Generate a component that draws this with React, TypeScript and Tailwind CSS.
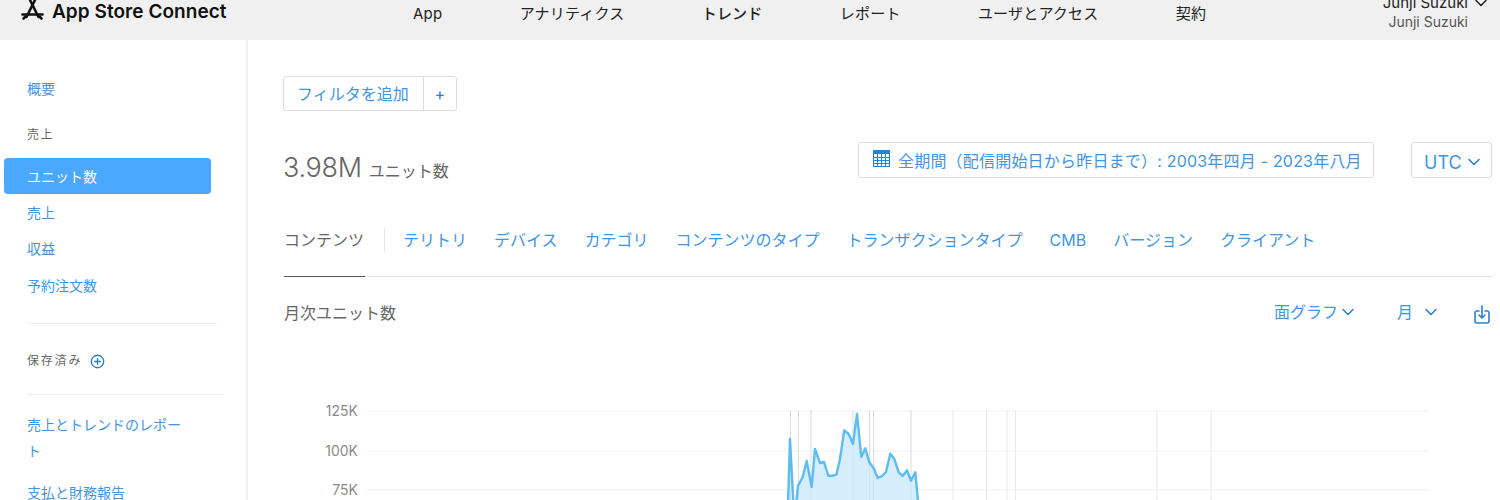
import React from "react";

const font = "font-['Inter','Noto_Sans_CJK_JP','Noto_Sans',sans-serif]";

const nav = [
  { t: "App", c: "" },
  { t: "アナリティクス", c: "" },
  { t: "トレンド", c: "font-medium" },
  { t: "レポート", c: "" },
  { t: "ユーザとアクセス", c: "" },
  { t: "契約", c: "" },
];

const tabs = ["テリトリ", "デバイス", "カテゴリ", "コンテンツのタイプ", "トランザクションタイプ", "CMB", "バージョン", "クライアント"];

const spike = "788,505 790,439 793.5,505";
const body =
  "796,505 798,486 802.7,477 806.7,461 811.7,487 815,449 820,463 824,462 828.3,475.7 832.7,475.7 836.3,474.7 840,459 844.3,430.3 848.7,434 853,444 857,414 861.3,457 865.3,448.3 869.3,462.3 873.7,468.3 877.7,478 882,476 886,472 890.3,453.7 894.3,459 898.7,472.3 902.7,476 907,470.3 911,480.7 915.3,472.3 918.3,505";

function Chevron({ className = "" }: { className?: string }) {
  return (
    <svg viewBox="0 0 12 8" className={className} fill="none" stroke="currentColor" strokeWidth="1.5" strokeLinecap="round" strokeLinejoin="round">
      <path d="M1 1.5 6 6.5 11 1.5" />
    </svg>
  );
}

function Logo() {
  return (
    <svg viewBox="0 0 23 22" className="w-[23px] h-[22px] text-[#111]" fill="none" stroke="currentColor" strokeWidth="2.6" strokeLinecap="round">
      <path d="M14 0 5.5 17" />
      <path d="M9 0 17.5 17" />
      <path d="M1.5 14.5H21.5" />
      <path d="M2.5 18.5 4 17M20.5 18.5 19 17" />
    </svg>
  );
}

function Chart() {
  const verticals = [790.5, 798.5, 811, 853, 869.5, 873.5, 911, 953, 986.5, 1007, 1015.5, 1157, 1211];
  return (
    <svg className="block absolute left-0 top-[400px]" width="1500" height="100" viewBox="0 400 1500 100">
      {[411, 451, 490].map((y) => (
        <line key={y} x1="366" x2="1428" y1={y} y2={y} stroke="#f1f1f1" />
      ))}
      {verticals.map((x) => (
        <line key={x} x1={x} x2={x} y1="410" y2="500" stroke="#e8e8e8" />
      ))}
      <polygon points={spike} fill="#d6eefc" />
      <polygon points={body} fill="#d6eefc" />
      {verticals.slice(0, 7).map((x) => (
        <line key={x} x1={x} x2={x} y1="410" y2="500" stroke="#c4c9cc" strokeOpacity="0.35" />
      ))}
      <polyline points={spike} fill="none" stroke="#5fbcf0" strokeWidth="2.4" strokeLinejoin="round" />
      <polyline points={body} fill="none" stroke="#5fbcf0" strokeWidth="2.4" strokeLinejoin="round" />
      {[["125K", 416], ["100K", 456], ["75K", 495]].map(([t, y]) => (
        <text key={t} x="358" y={y} textAnchor="end" fontSize="14" fill="#8a8a8a" fontFamily="Inter, sans-serif">
          {t}
        </text>
      ))}
    </svg>
  );
}

export default function App() {
  return (
    <div className={`${font} relative w-[1500px] h-[500px] overflow-hidden bg-white`}>
      <header className="h-10 bg-[#f0f0f0] flex items-start relative">
        <div className="flex items-start ml-[21px] gap-[8px] w-[206px] shrink-0">
          <Logo />
          <span className="text-[19px] leading-[22px] mt-[1px] font-semibold text-[#111] whitespace-nowrap tracking-[0.05px]">App Store Connect</span>
        </div>
        <nav className="flex gap-[77.3px] ml-[186px] mt-[4px] text-[15px] leading-5 tracking-[0.2px] text-[#222] whitespace-nowrap">
          {nav.map((n) => (
            <span key={n.t} className={n.c}>
              {n.t}
            </span>
          ))}
        </nav>
        <div className="ml-auto mr-[13px] -mt-[7px] flex flex-col items-end">
          <div className="flex items-center gap-[7px] text-[#222] text-[15px] leading-[20px] whitespace-nowrap">
            Junji Suzuki <Chevron className="w-[12px] h-[8px]" />
          </div>
          <div className="mr-[19px] text-[#555] text-[14px] leading-[18px] whitespace-nowrap">Junji Suzuki</div>
        </div>
      </header>

      <div className="flex">
        <aside className="w-[248px] h-[460px] border-r-2 border-[#f0f0f0] shrink-0 text-[14px] text-[#4295e2]">
          <div className="pl-[27px] pt-[39px] leading-[20px]">概要</div>
          <div className="pl-[27px] mt-[26px] text-[12px] leading-[20px] tracking-[1.5px] text-[#666]">売上</div>
          <div className="ml-[4px] mt-[13px] w-[207px] h-[36px] bg-[#4aa8ff] rounded-[4px] pl-[23px] flex items-center text-white">
            ユニット数
          </div>
          <div className="pl-[27px] mt-[5px] leading-[28px]">売上</div>
          <div className="pl-[27px] mt-[8px] leading-[28px]">収益</div>
          <div className="pl-[27px] mt-[9px] leading-[28px]">予約注文数</div>
          <div className="ml-[27px] mt-[23px] w-[190px] h-px bg-[#ececec]" />
          <div className="pl-[27px] mt-[29px] flex items-center gap-[6px] text-[12px] leading-4 tracking-[1.8px] text-[#666]">
            保存済み
            <svg viewBox="0 0 16 16" className="w-[15px] h-[15px] ml-[2px] text-[#2a7ccb]" fill="none" stroke="currentColor" strokeWidth="1.5" strokeLinecap="round">
              <circle cx="8" cy="8" r="6.6" />
              <path d="M8 5v6M5 8h6" />
            </svg>
          </div>
          <div className="ml-[27px] mt-[25px] w-[196px] h-px bg-[#ececec]" />
          <div className="pl-[27px] w-[194px] mt-[17px] leading-[26px]">売上とトレンドのレポート</div>
          <div className="pl-[27px] mt-[16px] leading-[26px]">支払と財務報告</div>
        </aside>

        <main className="flex-1 pl-[35px] pr-[8px] min-w-0">
          <div className="mt-[36px] inline-flex h-[35px] border border-[#dedede] rounded-[3px] text-[#4295e2] text-[16px] items-stretch">
            <span className="pl-[13px] pr-[14px] pt-[1px] flex items-center border-r border-[#dedede]">フィルタを追加</span>
            <span className="w-[32px] pt-[1px] flex items-center justify-center text-[#2a7ccb]">+</span>
          </div>

          <div className="flex items-start mt-[31px] h-[44px]">
            <div className="flex items-baseline gap-[7px] text-[#666] mt-[10px]">
              <span className="text-[27px] leading-8 font-light tracking-[-0.3px]">3.98M</span>
              <span className="text-[16px]">ユニット数</span>
            </div>
            <div className="ml-auto flex gap-[37px]">
              <div className="h-[36px] w-[516px] border border-[#dedede] rounded-[3px] flex items-center pl-[14px] gap-[8px] text-[16px] tracking-[0.2px] text-[#4295e2] whitespace-nowrap">
                <svg viewBox="0 0 17 17" className="w-[17px] h-[17px] -mt-[4px] text-[#2a80d4]" fill="none" stroke="currentColor" strokeWidth="1">
                  <rect x="0.5" y="0.5" width="16" height="16" />
                  <path d="M0.5 2.5h16" strokeWidth="3" />
                  <path d="M0 7.5h17M0 10.5h17M0 13.5h17M4.5 3v13M8.5 3v13M12.5 3v13" />
                </svg>
                <span className="pt-[1px]">全期間（配信開始日から昨日まで）: 2003年四月 - 2023年八月</span>
              </div>
              <div className="h-[36px] w-[81px] border border-[#dedede] rounded-[3px] flex items-center pl-[12px] gap-[6px] text-[18px] text-[#4295e2]">
                <span className="pt-[5px]">UTC</span> <Chevron className="w-[12px] h-[8px] mt-[3px] text-[#2a7ccb]" />
              </div>
            </div>
          </div>

          <div className="flex items-stretch h-[72px] mt-[19px] border-b border-[#e5e5e5] text-[16px] leading-6 text-[#4295e2] whitespace-nowrap">
            <div className="w-[81px] ml-[1px] pt-[23px] border-b border-[#555] h-[72px] text-[#666]">コンテンツ</div>
            <div className="w-px h-[24px] mt-[23px] ml-[19px] mr-[18px] bg-[#e5e5e5]" />
            <div className="flex gap-[27px] pt-[23px]">
              {tabs.map((t) => (
                <span key={t}>{t}</span>
              ))}
            </div>
          </div>

          <div className="flex items-center h-[36px] mt-[18px] text-[16px] text-[#4295e2]">
            <span className="ml-[1px] text-[#666]">月次ユニット数</span>
            <span className="ml-auto -mt-[2px]">面グラフ</span>
            <Chevron className="w-[12px] h-[8px] ml-[4px] -mt-[2px] text-[#2a7ccb]" />
            <span className="ml-[43px] -mt-[2px]">月</span>
            <Chevron className="w-[12px] h-[8px] ml-[12px] -mt-[2px] text-[#2a7ccb]" />
            <svg viewBox="0 0 16 19" className="w-[16px] h-[19px] ml-[37px] mr-[2px] mt-[3px] text-[#2a80d4]" fill="none" stroke="currentColor" strokeWidth="1.6" strokeLinecap="round" strokeLinejoin="round">
              <path d="M5 6H3a2 2 0 0 0-2 2v8a2 2 0 0 0 2 2h10a2 2 0 0 0 2-2V8a2 2 0 0 0-2-2h-2" />
              <path d="M8 1v12M5 10 8 13 11 10" />
            </svg>
          </div>
        </main>
      </div>
      <Chart />
    </div>
  );
}
